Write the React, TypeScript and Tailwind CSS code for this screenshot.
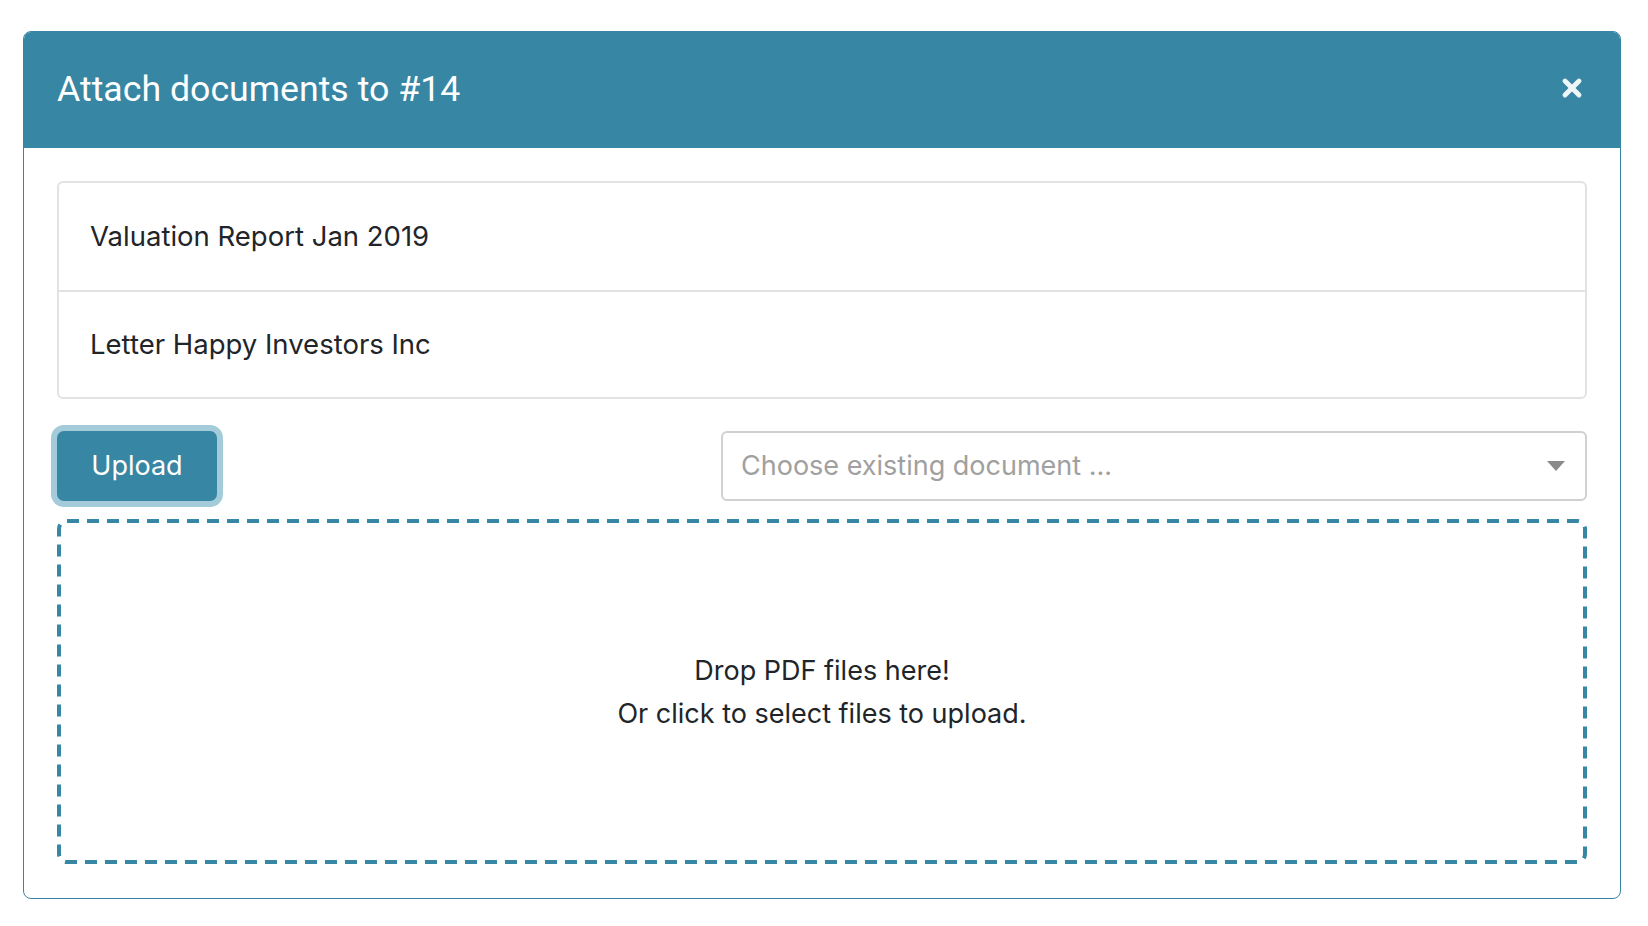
import { X } from "lucide-react";

const docs = ["Valuation Report Jan 2019", "Letter Happy Investors Inc"];

export default function App() {
  return (
    <div
      className="min-h-screen bg-white pt-[31px] pl-[23px]"
      style={{ fontFamily: "Inter, 'Noto Sans', sans-serif" }}
    >
      <div className="w-[1598px] rounded-[8px] border border-[#3686a4] overflow-hidden bg-white">
        {/* Header */}
        <div className="h-[116px] bg-[#3686a4] flex items-center justify-between pl-[33px] pr-[34px]">
          <h2
            className="text-[35.7px] leading-none text-white"
            style={{ fontFamily: "Roboto, sans-serif" }}
          >
            Attach documents to #14
          </h2>
          <button className="text-[#eef6f8] pb-[4px]">
            <X className="w-[28px] h-[28px]" strokeWidth={4.2} />
          </button>
        </div>

        {/* Body */}
        <div className="px-[33px] pt-[33px] pb-[34px]">
          <div className="rounded-[6px] border-2 border-[#e2e2e2]">
            {docs.map((d, i) => (
              <div
                key={d}
                className={
                  "h-[107px] flex items-center pl-[31px] text-[27.5px] text-[#212529] " +
                  (i > 0 ? "border-t-2 border-[#e2e2e2]" : "")
                }
              >
                {d}
              </div>
            ))}
          </div>

          {/* Actions row */}
          <div className="mt-[32px] flex items-center justify-between">
            <button className="h-[70px] w-[160px] rounded-[7px] bg-[#3686a4] text-white text-[27px] ring-[6px] ring-[#a3cbd9]">
              Upload
            </button>
            <div className="w-[866px] h-[70px] rounded-[6px] border-2 border-[#d0d0d0] flex items-center justify-between pl-[18px] pr-[20px]">
              <span className="text-[27px] text-[#a0a0a0]">
                Choose existing document ...
              </span>
              <svg width="18" height="10" viewBox="0 0 18 10">
                <path d="M0 0 L18 0 L9 10 Z" fill="#8a8a8a" />
              </svg>
            </div>
          </div>

          {/* Dropzone */}
          <div className="relative mt-[18px] h-[345px] flex flex-col items-center justify-center text-[27px] leading-[43px] text-[#212529]">
            <svg
              className="absolute inset-0 pointer-events-none"
              width="1530"
              height="345"
              viewBox="0 0 1530 345"
            >
              <rect
                x="2"
                y="2"
                width="1526"
                height="341"
                rx="8"
                fill="none"
                stroke="#3686a4"
                strokeWidth="4"
                strokeDasharray="12 8"
              />
            </svg>
            <p>Drop PDF files here!</p>
            <p>Or click to select files to upload.</p>
          </div>
        </div>
      </div>
    </div>
  );
}
